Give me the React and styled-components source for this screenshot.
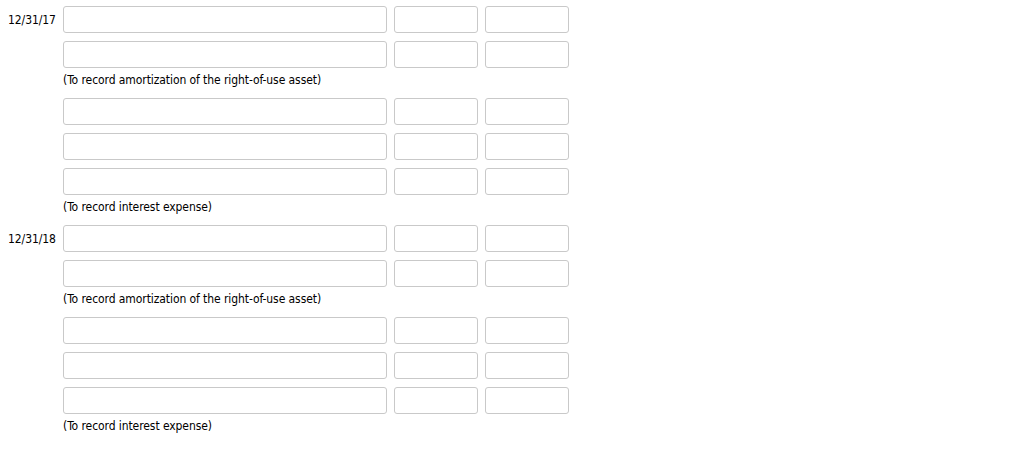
import React from "react";
import styled, { createGlobalStyle } from "styled-components";

const GlobalStyle = createGlobalStyle`
  html, body {
    margin: 0;
    padding: 0;
    background: #ffffff;
  }
  body {
    font-family: "DejaVu Sans", Verdana, sans-serif;
    font-stretch: semi-condensed;
    font-size: 12px;
    letter-spacing: -0.08px;
    color: #000000;
  }
`;

const Sheet = styled.div`
  display: flex;
  flex-direction: column;
  padding: 6px 0 0 8px;
`;

const EntryRow = styled.div`
  display: grid;
  grid-template-columns: 48px 324px 84px 84px;
  column-gap: 7px;
  align-items: center;
  height: 27px;
  margin-bottom: ${(p) => (p.$last ? "0" : "8px")};
`;

const DateLabel = styled.span`
  font-size: 12px;
  line-height: 14px;
  white-space: nowrap;
`;

const Field = styled.input`
  box-sizing: border-box;
  width: 100%;
  height: 27px;
  border: 1px solid #c9c9c9;
  border-radius: 3px;
  background: #ffffff;
  padding: 2px 6px;
  font: inherit;
  outline: none;
`;

const Note = styled.div`
  padding-left: 55px;
  margin: 5px 0 11px;
  font-size: 12px;
  line-height: 14px;
  white-space: nowrap;
`;

const entries = [
  { date: "12/31/17", groups: [{ rows: 2, note: "(To record amortization of the right-of-use asset)" }, { rows: 3, note: "(To record interest expense)" }] },
  { date: "12/31/18", groups: [{ rows: 2, note: "(To record amortization of the right-of-use asset)" }, { rows: 3, note: "(To record interest expense)" }] },
];

export default function App() {
  return (
    <>
      <GlobalStyle />
      <Sheet>
        {entries.map((entry) =>
          entry.groups.map((group, gi) => (
            <React.Fragment key={entry.date + gi}>
              {Array.from({ length: group.rows }).map((_, ri) => (
                <EntryRow key={ri} $last={ri === group.rows - 1}>
                  <DateLabel>{gi === 0 && ri === 0 ? entry.date : ""}</DateLabel>
                  <Field type="text" aria-label="Account" />
                  <Field type="text" aria-label="Debit" />
                  <Field type="text" aria-label="Credit" />
                </EntryRow>
              ))}
              <Note>{group.note}</Note>
            </React.Fragment>
          ))
        )}
      </Sheet>
    </>
  );
}
